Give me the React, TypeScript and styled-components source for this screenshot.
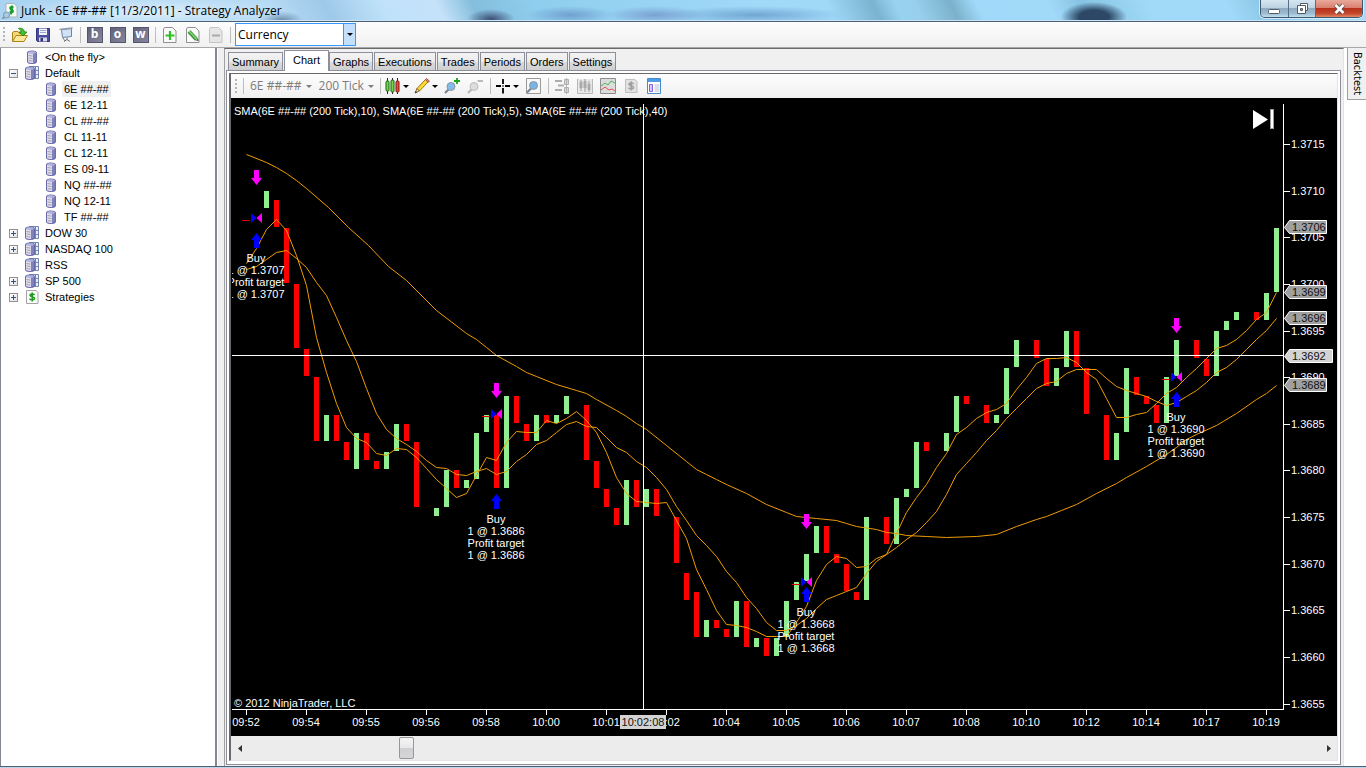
import React, { useState } from "react";
import styled, { createGlobalStyle } from "styled-components";

const uiFont = `"Open Sans", "Noto Sans", sans-serif`;
const sansFont = `"Liberation Sans", Arial, sans-serif`;

const Global = createGlobalStyle`
  * { box-sizing: border-box; }
  body { margin: 0; background: #f0f0f0; font: 11px/16px ${sansFont}; color: #000; }
  button, input, select { font: inherit; color: inherit; margin: 0; padding: 0; border: 0; background: none; }
  svg { display: block; }
`;

/* ---------- window frame ---------- */

const Window = styled.div`
  display: flex;
  flex-direction: column;
  height: 100vh;
  overflow: hidden;
  background: #f0f0f0;
`;

const TitleBar = styled.header`
  display: flex;
  align-items: center;
  flex: none;
  height: 22px;
  padding-left: 2px;
  gap: 3px;
  border-bottom: 1px solid #4c6078;
  box-shadow: inset 0 -1px 0 #c9e4f6;
  background:
    radial-gradient(ellipse 150px 16px at 150px 12px, rgba(225, 240, 252, 0.9), rgba(225, 240, 252, 0) 100%),
    radial-gradient(ellipse 22px 9px at 281px 20px, rgba(60, 90, 120, 0.6), rgba(60, 90, 120, 0) 100%),
    radial-gradient(ellipse 24px 10px at 491px 19px, rgba(50, 60, 100, 0.85), rgba(60, 80, 120, 0) 100%),
    radial-gradient(ellipse 44px 9px at 570px 15px, rgba(100, 140, 195, 0.7), rgba(100, 140, 195, 0) 100%),
    radial-gradient(ellipse 50px 9px at 655px 15px, rgba(110, 140, 195, 0.7), rgba(110, 140, 195, 0) 100%),
    radial-gradient(ellipse 90px 9px at 755px 15px, rgba(95, 145, 195, 0.7), rgba(95, 145, 195, 0) 100%),
    radial-gradient(ellipse 33px 15px at 1094px 17px, rgba(40, 65, 95, 0.95) 45%, rgba(60, 90, 120, 0) 100%),
    linear-gradient(64deg, #a9d3f1 0, #b4daf5 250px, #9fc9e9 300px, #bfe2fa 350px, #c5e2f9 400px, #84bedc 432px,
      #8fceee 490px, #95d2f2 560px, #a1d9f9 700px, #a0d8f8 750px, #7ab3cf 792px, #98d2f1 812px, #97cfec 830px,
      #7cb1cb 862px, #a0d9f9 885px, #a1d9f9 950px, #86c3e2 980px, #8fcbe9 1000px, #a1daf9 1040px, #a0d9f9 1110px,
      #86c3e2 1150px, #a1daf9 1180px, #a6daf7 100%);
`;

const Title = styled.h1`
  flex: 1;
  margin: 0;
  font: 400 12px/20px ${uiFont};
  white-space: nowrap;
`;

const WindowControls = styled.div`
  display: flex;
  align-self: flex-start;
  height: 18px;
  margin-right: 3px;
  border: 1px solid #40566b;
  border-top: 0;
  border-radius: 0 0 5px 5px;
  overflow: hidden;
  box-shadow: 0 0 0 1px rgba(225, 243, 255, 0.8);
`;

const WindowButton = styled.button<{ $close?: boolean }>`
  display: grid;
  place-items: center;
  width: ${(p) => (p.$close ? "47px" : "27px")};
  background: ${(p) =>
    p.$close
      ? "linear-gradient(#e9a99c, #d9806f 45%, #b8301b 50%, #c44a2c 80%, #e08a68)"
      : "linear-gradient(#d5e6f1, #bdd3e2 45%, #8fabc1 50%, #9dbdd2 80%, #c2e0ee)"};
  & + & { border-left: 1px solid #566f86; }
`;

const BottomEdge = styled.div`
  flex: none;
  height: 2px;
  border-top: 1px solid #4c6078;
  background: #b9d5e6;
`;

/* ---------- toolbars ---------- */

const Toolbar = styled.div<{ $inset?: boolean }>`
  display: flex;
  align-items: center;
  flex: none;
  height: ${(p) => (p.$inset ? "24px" : "26px")};
  padding-left: ${(p) => (p.$inset ? "3px" : "2px")};
  border-bottom: ${(p) => (p.$inset ? "0" : "1px solid #a8a8a8")};
  background: linear-gradient(#fdfdfd, #f0f0f0);
  font: 12px/16px ${uiFont};
`;

const Grip = styled.span<{ $inset?: boolean }>`
  flex: none;
  width: 2px;
  height: 15px;
  margin: 0 3px 0 1px;
  background: repeating-linear-gradient(#b4b4b4 0 2px, transparent 2px 4px);
`;

const Separator = styled.span`
  flex: none;
  width: 1px;
  height: 16px;
  margin: 0 2px 0 3px;
  background: #bdbdbd;
`;

const ToolButton = styled.button`
  display: grid;
  place-items: center;
  flex: none;
  width: 23px;
  height: 22px;
`;

const DropButton = styled.button<{ $text?: boolean }>`
  display: flex;
  align-items: center;
  flex: none;
  height: 22px;
  gap: ${(p) => (p.$text ? "4px" : "2px")};
  padding: ${(p) => (p.$text ? "0 3px 0 4px" : "0 3px 0 2px")};
  color: ${(p) => (p.$text ? "#7c7c7c" : "#000")};
`;

const Caret = styled.span`
  width: 5px;
  border: solid transparent;
  border-width: 3px 3px 0;
  border-top-color: currentColor;
`;

const LetterTile = styled.span`
  width: 16px;
  height: 16px;
  border: 1px solid #54546c;
  background: linear-gradient(135deg, #62627c, #85859c);
  color: #fff;
  font: 700 12px/12px ${uiFont};
  text-align: center;
`;

const ComboBox = styled.label`
  position: relative;
  display: flex;
  width: 121px;
  height: 23px;
  margin-left: 2px;
  border: 1px solid #3399ff;
  background: #fff;
`;

const ComboSelect = styled.select`
  flex: 1;
  appearance: none;
  padding-left: 2px;
  outline: 0;
`;

const ComboArrow = styled.span`
  position: absolute;
  right: 0;
  top: 0;
  bottom: 0;
  display: grid;
  place-items: center;
  width: 12px;
  border-left: 1px solid #3399ff;
  background: #c4dffb;
  pointer-events: none;
`;

/* ---------- body ---------- */

const Body = styled.div`
  display: flex;
  flex: 1;
  min-height: 0;
`;

const TreePane = styled.nav`
  flex: none;
  width: 217px;
  border: solid #828790;
  border-width: 0 2px 0 1px;
  background: #fff;
  overflow: hidden;
`;

const Tree = styled.ul`
  margin: 0;
  padding: 1px 0 0;
  list-style: none;
`;

const TreeRow = styled.li<{ $depth: number }>`
  display: flex;
  align-items: center;
  height: 16px;
  padding-left: ${(p) => (p.$depth ? "27px" : "8px")};
`;

const Expander = styled.button`
  flex: none;
  display: grid;
  place-items: center;
  width: 9px;
  height: 9px;
  border: 1px solid #919191;
  background: linear-gradient(135deg, #fff, #e4e4e4);
`;

const ExpanderGap = styled.span`
  flex: none;
  width: 9px;
`;

const TreeIcon = styled.span`
  flex: none;
  width: 16px;
  margin: 0 3px 0 6px;
`;

const TreeLabel = styled.button<{ $selected?: boolean }>`
  padding: 0 2px;
  background: ${(p) => (p.$selected ? "#f0f0f0" : "transparent")};
  line-height: 16px;
  white-space: nowrap;
`;

const Splitter = styled.div`
  flex: none;
  width: 7px;
  border-left: 1px solid #fff;
  background: #f0f0f0;
`;

const MainPane = styled.main`
  display: flex;
  flex-direction: column;
  flex: 1;
  min-width: 0;
  padding: 0 2px 1px 1px;
  border: 1px solid #a0a0a0;
  border-top-color: #696969;
  border-right-color: #e3e3e3;
  border-bottom: 0;
`;

const TabList = styled.div`
  display: flex;
  align-items: flex-end;
  flex: none;
  height: 21px;
  padding-left: 2px;
`;

const Tab = styled.button<{ $active?: boolean }>`
  position: relative;
  height: ${(p) => (p.$active ? "21px" : "18px")};
  margin-right: ${(p) => (p.$active ? "0" : "1px")};
  margin-bottom: ${(p) => (p.$active ? "-1px" : "0")};
  padding: ${(p) => (p.$active ? "0 8px 3px" : "0 3px")};
  border: 1px solid #8c8e99;
  border-bottom: 0;
  background: ${(p) => (p.$active ? "#fff" : "linear-gradient(#f3f3f3, #ebebeb 50%, #dcdcdc 52%, #cfcfcf)")};
  white-space: nowrap;
`;

const TabPage = styled.section`
  display: flex;
  flex-direction: column;
  flex: 1;
  min-height: 0;
  padding: 2px 2px 3px;
  border: 1px solid #8c8e99;
  background: #fff;
`;

const ChartFrame = styled.div`
  display: flex;
  flex-direction: column;
  flex: 1;
  min-height: 0;
  border: solid #696969;
  border-width: 1px 1px 1px 2px;
  border-right-color: #e3e3e3;
  border-bottom-color: #e3e3e3;
`;

const ChartArea = styled.div`
  flex: 1;
  min-height: 0;
  background: #000;
`;

const ChartSvg = styled.svg`
  width: 100%;
  height: 100%;
  font: 11px ${sansFont};
`;

const ScrollBar = styled.div`
  display: flex;
  flex: none;
  height: 24px;
  padding-top: 1px;
  background: #ececec;
`;

const ScrollArrow = styled.button`
  display: grid;
  place-items: center;
  width: 17px;
`;

const ScrollRange = styled.input`
  flex: 1;
  min-width: 0;
  height: 22px;
  appearance: none;
  &::-webkit-slider-thumb {
    appearance: none;
    width: 15px;
    height: 22px;
    border: 1px solid #979797;
    border-radius: 2px;
    background: linear-gradient(#f5f5f5, #e8e8e8 48%, #cfcfd2 52%, #d6d6d8);
  }
`;

const SideRail = styled.aside`
  flex: none;
  display: flex;
  align-items: flex-start;
  width: 22px;
  padding-left: 3px;
  background: #fff;
`;

const SideTab = styled.button`
  width: 19px;
  height: 52px;
  border: 1px solid #a0a0a0;
  border-width: 0 0 1px 1px;
  background: #f0f0f0;
  font: 11px/18px "DejaVu Sans Condensed", "Noto Sans", sans-serif;
  writing-mode: vertical-rl;
`;

/* ---------- icons ---------- */

const Icon = ({ children }: { children: React.ReactNode }) => (
  <svg width="16" height="16" viewBox="0 0 16 16" fill="none" aria-hidden="true">
    {children}
  </svg>
);

const Page = ({ stroke = "#8f8f8f" }: { stroke?: string }) => (
  <path d="M2.500 .5h8l3.500 3.500v11.500H1.500V2z" fill="#fafafa" stroke={stroke} />
);

const AppIcon = () => (
  <Icon>
    <path d="M4 .5h8l3 3V14H4z" fill="#f4faf4" stroke="#a9b5b9" />
    <path d="M11.500 4.500c-3-1.500-4.500.8-2 2s1.500 3.800-2 2.200M10 2.500l-1 9" stroke="#179a2b" strokeWidth="2" />
    <circle cx="4.500" cy="12" r="3" fill="#a8cbe6" stroke="#7898b5" />
    <path d="M2.500 14 0 16" stroke="#8a98a6" strokeWidth="2" />
  </Icon>
);

const OpenIcon = () => (
  <Icon>
    <path d="M.5 14V5.500l1.500-1h4l1.500 2h5v3" fill="#f7d774" stroke="#a88419" />
    <path d="M.5 14.500 4 8.500h11.500L12 14.500z" fill="#fde89a" stroke="#a88419" />
    <path d="M6.500 1.500c3-1 5.500.5 6 3.500h2.500l-4 4-4-4h2.300c-.3-1.500-1-2.600-2.800-3.500z" fill="#43c32b" stroke="#1d7f14" strokeWidth=".8" />
  </Icon>
);

const SaveIcon = () => (
  <Icon>
    <path d="M1.500 1.500h13v13h-12l-1-1z" fill="#4a4c9c" stroke="#34357a" />
    <path d="M4 1.500h8V8H4z" fill="#f2f4fc" />
    <path d="M5 3.500h6M5 5.500h6" stroke="#9aa3d2" />
    <path d="M4 10.500h8v4H4z" fill="#d5d7ea" />
    <path d="M5.500 11h2.500v3.500H5.500z" fill="#34357a" />
  </Icon>
);

const ScreenIcon = () => (
  <Icon>
    <path d="M3.500 2.500 13.500 1.500v8l-9 1z" fill="#cfe2f6" stroke="#70849c" />
    <path d="M1.500 2.500 14.500 1" stroke="#8d9cae" strokeWidth="1.500" />
    <path d="M9 10.500V13M6 14.500l3-2 3 2M5 11l2 3" stroke="#6f7a87" />
  </Icon>
);

const PageAddIcon = () => (
  <Icon>
    <Page />
    <path d="M8 4v9M3.500 8.500h9" stroke="#2fc125" strokeWidth="2.200" />
  </Icon>
);

const PageEditIcon = () => (
  <Icon>
    <Page />
    <path d="m4 4.500 7.500 8" stroke="#3b9434" strokeWidth="4" />
    <path d="m4 4 7.500 8" stroke="#86d77a" strokeWidth="1.500" />
    <path d="m11 13.500 2.500.5-.5-2.500z" fill="#444" />
  </Icon>
);

const PageRemoveIcon = () => (
  <Icon>
    <path d="M2.500 .5h8l3.500 3.500v11.500H1.500V2z" fill="#e6e6e6" stroke="#c4c4c4" />
    <path d="M4 8.500h8" stroke="#a9a9a9" strokeWidth="2" />
  </Icon>
);

const cylinder = (x: number) => (
  <>
    <path d={`M${x} 3.500c0-2 9-2 9 0v9.500c0 2-9 2-9 0z`} fill="#7f81bd" stroke="#55569a" strokeWidth=".8" />
    <path d={`M${x + 0.5} 4v9c1 .8 3 1 5 1V4.500z`} fill="#dcdcf4" />
    <ellipse cx={x + 4.5} cy="3.400" rx="3.800" ry="1.200" fill="#b5b6e0" />
    <path d={`M${x + 1} 6.500l4 .6M${x + 1} 9l4 .6M${x + 1} 11.500l4 .6`} stroke="#a59a94" strokeWidth=".9" />
  </>
);

const InstrumentIcon = () => <Icon>{cylinder(3.5)}</Icon>;

const ListIcon = () => (
  <Icon>
    <path d="M5.500 1.500h9v12h-9zM11.500 1.500v12M5.500 5.500h9M5.500 9.500h9" fill="#e8eefa" stroke="#7488ae" />
    {cylinder(1.5)}
  </Icon>
);

const StrategyIcon = ({ gray }: { gray?: boolean }) => (
  <Icon>
    <path d="M3 1.500h9l2 2v11H2.500v-13z" fill={gray ? "#e2e2e2" : "#fafafa"} stroke={gray ? "#c0c0c0" : "#a2a2a2"} />
    <path d="M10.500 6c-1.200-1.500-4.500-1.300-4.500.2 0 1.800 4.500 1.300 4.500 3.300 0 1.700-3.500 1.800-5 .2M8.200 3.500v9" stroke={gray ? "#9e9e9e" : "#1d9b20"} strokeWidth="1.600" />
  </Icon>
);

const CandlesIcon = () => (
  <Icon>
    <path d="M2.500 0v16M7.500 0v16M12.500 0v16" stroke="#222" />
    <rect x="1" y="3" width="3" height="10" rx="1" fill="#6fd84b" stroke="#1b6410" />
    <rect x="6" y="2" width="3" height="12" rx="1" fill="#6fd84b" stroke="#1b6410" />
    <rect x="11" y="3" width="3" height="11" rx="1" fill="#f04a3c" stroke="#7c1510" />
  </Icon>
);

const PencilIcon = () => (
  <Icon>
    <path d="M3 10.500 11.500 1.500l2.500 2.500-8.500 9z" fill="#fbdc33" stroke="#9a7410" />
    <path d="m11.500 1.500 1-1 3 2.500-1.500 1.500z" fill="#e88a7c" stroke="#93483f" strokeWidth=".8" />
    <path d="m3 10.500-2 4.500 4.500-2z" fill="#f3d7a8" stroke="#6b4c14" strokeWidth=".8" />
    <path d="m1 15 .8-2 1.400 1.300z" fill="#222" />
  </Icon>
);

const ZoomIcon = ({ gray }: { gray?: boolean }) => (
  <Icon>
    <path d="M4.500 11.500 1 15" stroke={gray ? "#b7b7b7" : "#76828e"} strokeWidth="2.200" />
    <circle cx="7" cy="8.500" r="4" fill={gray ? "#dcdcdc" : "#84bce8"} stroke={gray ? "#bcbcbc" : "#8796a6"} />
    {gray ? (
      <path d="M10.500 3h5.500" stroke="#aaa" strokeWidth="1.600" />
    ) : (
      <path d="M13 0v6M10 3h6" stroke="#1da31b" strokeWidth="1.800" />
    )}
  </Icon>
);

const CrosshairIcon = () => (
  <Icon>
    <path d="M8 1v5M8 10v5.500M1 8h5M10 8h5M7.500 8h1" stroke="#000" strokeWidth="1.800" />
  </Icon>
);

const ZoomPageIcon = () => (
  <Icon>
    <path d="M1.500 .5h14v15h-14z" fill="#f8f8f8" stroke="#9a9a9a" />
    <path d="m6 10.500-4 4" stroke="#76828e" strokeWidth="2.200" />
    <circle cx="8.500" cy="7.500" r="4" fill="#78b4e4" stroke="#8796a6" />
  </Icon>
);

const TraderIcon = () => (
  <Icon>
    <path d="M1 3h7M4 7.500h6M1 12h7" stroke="#adadad" strokeWidth="2" />
    <path d="M10.500 1.500h4v5h-4zM10.500 9.500h4v5h-4zM12.500 0v16" fill="#d8d8d8" stroke="#b0b0b0" />
  </Icon>
);

const BarsIcon = () => (
  <Icon>
    <path d="M.5 1v14.500h15V1" fill="#e8e8e8" stroke="#b9b9b9" />
    <path d="M4 2v11M8 1v13M12 3v11" stroke="#999" />
    <path d="M4 4v6M8 3v7M12 6v6" stroke="#aaa" strokeWidth="3" />
  </Icon>
);

const IndicatorIcon = () => (
  <Icon>
    <path d="M.5 .5h15v15H.5z" fill="#dcdcdc" stroke="#8d8d8d" />
    <path d="m1 8 4-3 3 2 3-4 4 2" stroke="#4db45b" />
    <path d="m1 12 4-3 4 3 3-1 3 2" stroke="#e55353" />
  </Icon>
);

const PanelIcon = () => (
  <Icon>
    <path d="M1.500 .5h13v15h-13z" fill="#fff" stroke="#4a8bd0" />
    <path d="M2 2.500h12" stroke="#4f9be6" strokeWidth="3" />
    <path d="M3.500 6.500h3v7h-3z" fill="#d7c8fb" stroke="#8663e0" />
    <path d="M8.500 7h5M8.500 9h5M8.500 11h5M8.500 13h5" stroke="#b4bccb" />
  </Icon>
);

/* ---------- chart data ---------- */

// prices are written without the leading "1." (3715 is 1.3715)
const TICK = 9.326;
const TOP_PRICE = 3715;
const priceY = (p: number) => Math.round(144.05 + (TOP_PRICE - p) * TICK);

// [slot, open, close]; slots are ten units apart
const bars: [number, number, number][] = [
  [2, 3708, 3710], [3, 3709, 3706], [4, 3706, 3700], [5, 3700, 3693], [6, 3693, 3690], [7, 3690, 3683],
  [8, 3683, 3686], [9, 3686, 3683], [10, 3683, 3681], [11, 3680, 3684], [12, 3684, 3681], [13, 3681, 3680],
  [14, 3680, 3682], [15, 3682, 3685], [16, 3685, 3683], [17, 3683, 3676], [19, 3675, 3676], [20, 3676, 3680],
  [21, 3680, 3678], [22, 3678, 3679], [23, 3679, 3684], [24, 3684, 3686], [25, 3686, 3678], [26, 3678, 3688],
  [27, 3688, 3685], [28, 3685, 3683], [29, 3683, 3686], [30, 3686, 3685], [31, 3685, 3686], [32, 3686, 3688],
  [34, 3687, 3681], [35, 3681, 3678], [36, 3678, 3676], [37, 3676, 3674], [38, 3674, 3679], [39, 3679, 3676],
  [40, 3676, 3678], [41, 3678, 3675], [43, 3675, 3670], [44, 3669, 3666], [45, 3667, 3662], [46, 3662, 3664],
  [47, 3664, 3663], [48, 3663, 3662], [49, 3662, 3666], [50, 3666, 3661], [51, 3661, 3662], [52, 3662, 3660],
  [53, 3660, 3662], [54, 3662, 3666], [55, 3666, 3668], [56, 3668, 3671], [57, 3671, 3674], [58, 3674, 3671],
  [59, 3671, 3670], [60, 3670, 3667], [61, 3667, 3666], [62, 3666, 3675], [64, 3675, 3672], [65, 3672, 3677],
  [66, 3677, 3678], [67, 3678, 3683], [68, 3683, 3682], [70, 3682, 3684], [71, 3684, 3688], [72, 3688, 3687],
  [74, 3687, 3685], [75, 3685, 3686], [76, 3686, 3691], [77, 3691, 3694], [79, 3694, 3692], [80, 3692, 3689],
  [81, 3689, 3691], [82, 3691, 3695], [83, 3695, 3691], [84, 3691, 3686], [86, 3686, 3681], [87, 3681, 3684],
  [88, 3684, 3691], [89, 3690, 3688], [90, 3688, 3687], [91, 3687, 3685], [92, 3685, 3690], [93, 3690, 3694],
  [95, 3694, 3692], [96, 3692, 3690], [97, 3690, 3695], [98, 3695, 3696], [99, 3696, 3697], [101, 3697, 3696],
  [102, 3696, 3699], [103, 3699, 3706],
];

const fast = [
  263, 248, 229, 219, 230, 255, 285, 337, 372, 403, 427, 438, 442, 453, 455, 448, 449, 457, 468, 479, 488, 497, 493,
  475, 457, 460, 442, 431, 432, 432, 420, 423, 418, 411, 420, 432, 452, 477, 493, 501, 502, 503, 502, 520, 538, 569,
  589, 610, 624, 625, 627, 631, 636, 636, 636, 622, 606, 580, 564, 556, 558, 567, 566, 558, 554, 533, 512, 497, 484,
  467, 453, 434, 427, 418, 412, 409, 403, 389, 377, 363, 358, 358, 357, 362, 372, 379, 398, 417, 417, 414, 412, 403,
  393, 387, 377, 368, 358, 348, 345, 339, 330, 319, 312, 292,
];

const medium = [
  269, 266, 259, 252, 250, 258, 267, 282, 295, 317, 340, 361, 388, 413, 429, 438, 444, 451, 460, 467, 468, 474, 475,
  471, 468, 474, 471, 461, 454, 444, 440, 432, 424, 421, 426, 427, 437, 447, 452, 461, 467, 477, 489, 506, 520, 535,
  545, 556, 571, 582, 597, 608, 622, 630, 630, 625, 618, 608, 599, 595, 591, 587, 573, 561, 554, 547, 539, 532, 522,
  511, 494, 474, 463, 452, 440, 430, 418, 408, 398, 388, 383, 381, 373, 369, 369, 369, 378, 386, 390, 393, 396, 401,
  405, 402, 396, 390, 382, 372, 367, 359, 349, 339, 330, 318,
];

const slow =
  "246,154 266,162 276,167 286,173 296,180 306,188 328,207 348,227 368,245 388,266 406,280 436,310 466,333 476,339 486,347 496,355 516,366 526,372 536,376 556,384 576,390 586,393 596,399 616,410 626,416 636,423 646,429 666,445 686,461 696,469 706,474 716,479 726,484 746,493 766,504 786,512 796,516 806,517 816,518 836,520 846,523 856,526 876,529 886,532 896,533 906,535 926,536 946,537 976,536 996,534 1016,526 1036,519 1046,516 1061,510 1076,504 1096,493 1116,483 1126,477 1146,466 1166,454 1176,447 1186,439 1196,434 1216,425 1236,413 1256,399 1266,393 1276,385";

const toPoints = (ys: number[]) => ys.map((y, i) => `${246 + i * 10},${y}`).join(" ");

const trades = [
  { x: 256, down: 170, mid: 218, up: 233, price: "1.3707" },
  { x: 496, down: 383, mid: 414, up: 494, price: "1.3686" },
  { x: 806, down: 514, mid: 582, up: 587, price: "1.3668" },
  { x: 1176, down: 318, mid: 377, up: 392, price: "1.3690" },
];

const times = [
  "09:52", "09:54", "09:55", "09:56", "09:58", "10:00", "10:01", "10:02", "10:04",
  "10:05", "10:06", "10:07", "10:08", "10:10", "10:12", "10:14", "10:17", "10:19",
];

const priceLabels = Array.from({ length: 13 }, (_, i) => TOP_PRICE - i * 5);

const tags = [
  { y: 227, text: "1.3706", w: 43, fill: "#a0a0a0" },
  { y: 292, text: "1.3699", w: 43, fill: "#a0a0a0" },
  { y: 318, text: "1.3696", w: 43, fill: "#a0a0a0" },
  { y: 356, text: "1.3692", w: 49, fill: "#d3d3d3" },
  { y: 385, text: "1.3689", w: 43, fill: "#a0a0a0" },
];

const Chart = () => (
  <ChartSvg viewBox="231 98 1106 638" role="img" aria-label="6E 200 tick chart with moving averages">
    <defs>
      <clipPath id="plot">
        <rect x="232" y="98" width="1052" height="612" />
      </clipPath>
    </defs>

    <g shapeRendering="crispEdges">
      {bars.map(([slot, open, close]) => {
        const top = priceY(Math.max(open, close));
        return (
          <rect
            key={slot}
            x={244 + slot * 10}
            y={top}
            width="5"
            height={priceY(Math.min(open, close)) - 1 - top}
            fill={close > open ? "#90ee90" : "#ff0000"}
          />
        );
      })}
    </g>

    <g transform="translate(.5 .5)" fill="none" stroke="#f09c00">
      <polyline points={toPoints(fast)} />
      <polyline points={toPoints(medium)} />
      <polyline points={slow} />
    </g>

    <g clipPath="url(#plot)">
      {trades.map((t) => (
        <g key={t.x}>
          <path d={`M${t.x - 2} ${t.down}h5v8h3l-5.500 7-5.500-7h3z`} fill="#ff00ff" />
          <path d={`M${t.x - 14} ${t.mid + 2.5}h8`} stroke="#e00000" />
          <path d={`M${t.x - 5} ${t.mid - 5}v10l5.500-5z`} fill="#0000ff" />
          <path d={`M${t.x + 6} ${t.mid - 5}v10l-5.500-5z`} fill="#ff00ff" />
          <path d={`M${t.x - 2} ${t.up + 15}h5v-8h3l-5.500-7-5.500 7h3z`} fill="#0000ff" />
          <g fill="#fff" textAnchor="middle">
            <text x={t.x} y={t.up + 29}>Buy</text>
            <text x={t.x} y={t.up + 41}>{`1 @ ${t.price}`}</text>
            <text x={t.x} y={t.up + 53}>Profit target</text>
            <text x={t.x} y={t.up + 65}>{`1 @ ${t.price}`}</text>
          </g>
        </g>
      ))}
    </g>

    <g fill="#fff">
      <text x="234" y="115">SMA(6E ##-## (200 Tick),10), SMA(6E ##-## (200 Tick),5), SMA(6E ##-## (200 Tick),40)</text>
      <text x="234" y="707">© 2012 NinjaTrader, LLC</text>
      <path d="M1253 110l15 9.500-15 9.500z" />
      <rect x="1270.500" y="109.500" width="3" height="19" stroke="#999" />
      <g shapeRendering="crispEdges">
        <rect x="1283" y="104" width="1" height="606" />
        <rect x="232" y="709" width="1052" height="1" />
        <rect x="643" y="104" width="1" height="605" />
        <rect x="232" y="355" width="1052" height="1" />
        {times.map((t, i) => (
          <rect key={t} x={246 + i * 60} y="710" width="1" height="5" />
        ))}
        {priceLabels.map((p) => (
          <rect key={p} x="1284" y={priceY(p)} width="6" height="1" />
        ))}
      </g>
      <g textAnchor="middle">
        {times.map((t, i) => (
          <text key={t} x={246 + i * 60} y="726">{t}</text>
        ))}
      </g>
      {priceLabels.map((p) => (
        <text key={p} x="1291" y={priceY(p) + 4}>{`1.${p}`}</text>
      ))}
    </g>

    {tags.map((t) => (
      <g key={t.text}>
        <path d={`M1284.500 ${t.y + 0.5}l5-7h${t.w - 6}v13h-${t.w - 6}z`} fill={t.fill} stroke="#fff" />
        <text x="1292" y={t.y + 4} fill="#111">{t.text}</text>
      </g>
    ))}

    <rect x="620" y="715" width="46" height="14" fill="#d3d3d3" />
    <text x="643" y="726" textAnchor="middle" fill="#111">10:02:08</text>
  </ChartSvg>
);

/* ---------- screen ---------- */

type TreeItem = { label: string; depth: number; icon: "item" | "list" | "strategy"; state?: "open" | "closed"; selected?: boolean };

const treeItems: TreeItem[] = [
  { label: "<On the fly>", depth: 0, icon: "item" },
  { label: "Default", depth: 0, icon: "list", state: "open" },
  { label: "6E ##-##", depth: 1, icon: "item", selected: true },
  { label: "6E 12-11", depth: 1, icon: "item" },
  { label: "CL ##-##", depth: 1, icon: "item" },
  { label: "CL 11-11", depth: 1, icon: "item" },
  { label: "CL 12-11", depth: 1, icon: "item" },
  { label: "ES 09-11", depth: 1, icon: "item" },
  { label: "NQ ##-##", depth: 1, icon: "item" },
  { label: "NQ 12-11", depth: 1, icon: "item" },
  { label: "TF ##-##", depth: 1, icon: "item" },
  { label: "DOW 30", depth: 0, icon: "list", state: "closed" },
  { label: "NASDAQ 100", depth: 0, icon: "list", state: "closed" },
  { label: "RSS", depth: 0, icon: "list" },
  { label: "SP 500", depth: 0, icon: "list", state: "closed" },
  { label: "Strategies", depth: 0, icon: "strategy", state: "closed" },
];

const treeIcons = { item: <InstrumentIcon />, list: <ListIcon />, strategy: <StrategyIcon /> };

const tabs = ["Summary", "Chart", "Graphs", "Executions", "Trades", "Periods", "Orders", "Settings"];

export default function App() {
  const [activeTab, setActiveTab] = useState("Chart");
  return (
    <Window>
      <Global />
      <TitleBar>
        <AppIcon />
        <Title>Junk - 6E ##-## [11/3/2011] - Strategy Analyzer</Title>
        <WindowControls>
          <WindowButton aria-label="Minimize">
            <svg width="13" height="12"><rect x=".5" y="6.500" width="11" height="4" rx="1" fill="#fff" stroke="#555c66" /></svg>
          </WindowButton>
          <WindowButton aria-label="Restore">
            <svg width="13" height="13">
              <path d="M4.500 1.500h7v7h-7z" fill="#fff" stroke="#555c66" />
              <path d="M1.500 3.500h8v8h-8z" fill="#fff" stroke="#555c66" />
              <path d="M4.500 6.500h2v2h-2z" fill="#9ab" stroke="#555c66" />
            </svg>
          </WindowButton>
          <WindowButton $close aria-label="Close">
            <svg width="13" height="12">
              <path d="m2.500 2 8 8m0-8-8 8" stroke="#5e4a4c" strokeWidth="4.500" />
              <path d="m2.500 2 8 8m0-8-8 8" stroke="#fff" strokeWidth="2.600" />
            </svg>
          </WindowButton>
        </WindowControls>
      </TitleBar>

      <Toolbar>
        <Grip />
        <ToolButton aria-label="Open"><OpenIcon /></ToolButton>
        <ToolButton aria-label="Save"><SaveIcon /></ToolButton>
        <ToolButton aria-label="Display"><ScreenIcon /></ToolButton>
        <Separator />
        <ToolButton><LetterTile>b</LetterTile></ToolButton>
        <ToolButton><LetterTile>o</LetterTile></ToolButton>
        <ToolButton><LetterTile>w</LetterTile></ToolButton>
        <Separator />
        <ToolButton aria-label="Add"><PageAddIcon /></ToolButton>
        <ToolButton aria-label="Edit"><PageEditIcon /></ToolButton>
        <ToolButton aria-label="Remove"><PageRemoveIcon /></ToolButton>
        <Separator />
        <ComboBox>
          <ComboSelect aria-label="Display unit" defaultValue="Currency">
            <option>Currency</option>
          </ComboSelect>
          <ComboArrow><Caret /></ComboArrow>
        </ComboBox>
      </Toolbar>

      <Body>
        <TreePane aria-label="Instruments">
          <Tree>
            {treeItems.map((item) => (
              <TreeRow key={item.label} $depth={item.depth}>
                {item.state ? (
                  <Expander aria-label={item.state === "open" ? "Collapse" : "Expand"}>
                    <svg width="5" height="5" shapeRendering="crispEdges">
                      <path d={item.state === "open" ? "M0 2.500h5" : "M0 2.500h5M2.500 0v5"} stroke="#3b4f87" />
                    </svg>
                  </Expander>
                ) : (
                  <ExpanderGap />
                )}
                <TreeIcon>{treeIcons[item.icon]}</TreeIcon>
                <TreeLabel $selected={item.selected}>{item.label}</TreeLabel>
              </TreeRow>
            ))}
          </Tree>
        </TreePane>
        <Splitter />

        <MainPane>
          <TabList role="tablist">
            {tabs.map((t) => (
              <Tab key={t} role="tab" aria-selected={t === activeTab} $active={t === activeTab} onClick={() => setActiveTab(t)}>
                {t}
              </Tab>
            ))}
          </TabList>
          <TabPage>
            <ChartFrame>
              <Toolbar $inset>
                <Grip />
                <Separator />
                <DropButton $text>6E ##-##<Caret /></DropButton>
                <DropButton $text>200 Tick<Caret /></DropButton>
                <Separator />
                <DropButton aria-label="Chart style"><CandlesIcon /><Caret /></DropButton>
                <DropButton aria-label="Drawing tools"><PencilIcon /><Caret /></DropButton>
                <ToolButton aria-label="Zoom in"><ZoomIcon /></ToolButton>
                <ToolButton aria-label="Zoom out"><ZoomIcon gray /></ToolButton>
                <Separator />
                <DropButton aria-label="Cursor"><CrosshairIcon /><Caret /></DropButton>
                <ToolButton aria-label="Data box"><ZoomPageIcon /></ToolButton>
                <Separator />
                <ToolButton aria-label="Chart trader"><TraderIcon /></ToolButton>
                <ToolButton aria-label="Data series"><BarsIcon /></ToolButton>
                <ToolButton aria-label="Indicators"><IndicatorIcon /></ToolButton>
                <ToolButton aria-label="Strategies"><StrategyIcon gray /></ToolButton>
                <ToolButton aria-label="Properties"><PanelIcon /></ToolButton>
              </Toolbar>
              <ChartArea>
                <Chart />
              </ChartArea>
              <ScrollBar>
                <ScrollArrow aria-label="Scroll left">
                  <svg width="4" height="7"><path d="M4 0v7L0 3.500z" fill="#333" /></svg>
                </ScrollArrow>
                <ScrollRange type="range" aria-label="Chart position" min="0" max="1000" defaultValue="143" />
                <ScrollArrow aria-label="Scroll right">
                  <svg width="4" height="7"><path d="M0 0v7l4-3.500z" fill="#333" /></svg>
                </ScrollArrow>
              </ScrollBar>
            </ChartFrame>
          </TabPage>
        </MainPane>

        <SideRail>
          <SideTab>Backtest</SideTab>
        </SideRail>
      </Body>
      <BottomEdge />
    </Window>
  );
}
